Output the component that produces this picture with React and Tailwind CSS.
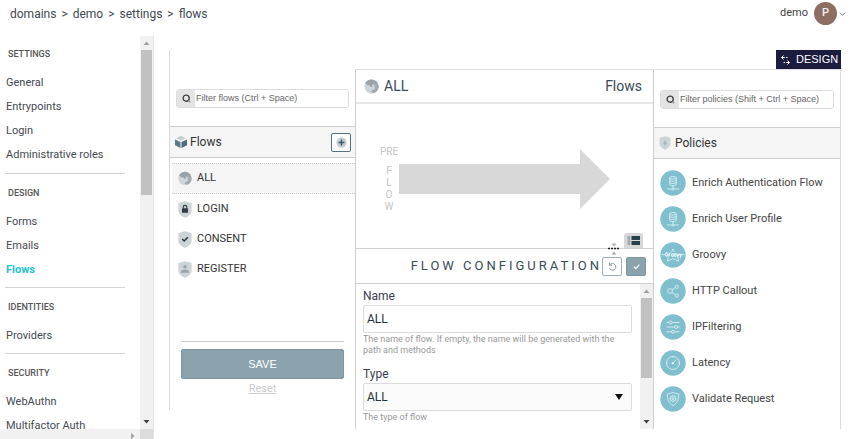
import React from 'react';

const SECTIONS = [
  { title: 'SETTINGS', items: ['General', 'Entrypoints', 'Login', 'Administrative roles'] },
  { title: 'DESIGN', items: ['Forms', 'Emails', 'Flows'] },
  { title: 'IDENTITIES', items: ['Providers'] },
  { title: 'SECURITY', items: ['WebAuthn', 'Multifactor Auth'] },
];

const CRUMBS = ['domains', 'demo', 'settings', 'flows'];

function Globe({ className }) {
  return (
    <svg viewBox="0 0 16 16" className={className} aria-hidden="true">
      <circle cx="8" cy="8" r="7.6" fill="#cdd6da" />
      <path d="M1.200 4.600C2.600 1.800 5.400.4 8 .4c2.800 0 5.200 1.500 6.600 3.800l-1.300 2.600-2.300-1.200-2.600.6.8 1.600-1.900.9-1.600-2.300-2 .6-.9-1.600z" fill="#9aa3a9" />
      <path d="M10.200 6.200l2.200.6 1.400-2.800c1.100 1.100 1.800 2.600 1.800 4 0 3.500-2.300 6.300-5.300 7.200l-2.600-1.300.7-1.800 2.200-.6 1.200-2.400z" fill="#a0aab0" />
    </svg>
  );
}

function Shield({ children, className = 'h-[17px] w-[14px] shrink-0' }) {
  return (
    <svg viewBox="0 0 14 17" className={className} aria-hidden="true">
      <path d="M7 .3l6.600 1.700v7.200c0 3.400-2.500 6-6.600 7.500C2.900 15.200.4 12.600.4 9.200V2z" fill="#ccd4d8" />
      {children}
    </svg>
  );
}

const FLOWS = [
  { name: 'ALL', icon: <Globe className="h-[15px] w-[14px] shrink-0" /> },
  {
    name: 'LOGIN',
    icon: (
      <Shield>
        <rect x="4" y="7.200" width="6" height="4.600" rx=".6" fill="#333a3f" />
        <path d="M5.200 7.500V6.200a1.800 1.800 0 0 1 3.600 0v1.300" fill="none" stroke="#333a3f" strokeWidth="1.100" />
      </Shield>
    ),
  },
  {
    name: 'CONSENT',
    icon: (
      <Shield>
        <path d="M4.200 8l2 2 3.600-3.800" fill="none" stroke="#2a3136" strokeWidth="1.500" />
      </Shield>
    ),
  },
  {
    name: 'REGISTER',
    icon: (
      <Shield>
        <circle cx="7" cy="5.800" r="1.800" fill="#9aa3a8" />
        <path d="M3 11.800c0-2.400 1.600-3.400 4-3.400s4 1 4 3.400z" fill="#9aa3a8" />
      </Shield>
    ),
  },
];

const database = (
  <>
    <ellipse cx="13" cy="7.800" rx="3.300" ry="1.300" />
    <path d="M9.700 7.800v6.600c0 .8 1.500 1.300 3.300 1.300s3.300-.5 3.300-1.300V7.800M9.700 10c0 .8 1.500 1.300 3.300 1.300s3.300-.5 3.300-1.300M9.700 12.200c0 .8 1.500 1.300 3.300 1.300s3.300-.5 3.300-1.300M13 15.700v2.500M7 19h4.900M14.100 19H19" />
    <circle cx="13" cy="19" r="1" />
  </>
);

const POLICIES = [
  { name: 'Enrich Authentication Flow', icon: database },
  { name: 'Enrich User Profile', icon: database },
  {
    name: 'Groovy',
    icon: (
      <>
        <path d="M13 7l1.600 3.200M13 7l-1.600 3.200M8.500 14.800l-1.300 4.400 5.800-2.600 5.800 2.600-1.300-4.400" />
        <path d="M1.500 12.700h4M21 12.700h3.500" />
        <path d="M8.200 11.200c-1-1-2.600-.4-2.700 1.200-.1 1.700 1.700 2.200 2.600 1v-1h-1M9.400 14.400v-2.600c.3-.6.800-.8 1.300-.6M12.500 11.600c-1.300 0-1.300 2.800 0 2.800s1.300-2.800 0-2.800zM15.300 11.600c-1.300 0-1.300 2.800 0 2.800s1.300-2.800 0-2.800zM17 11.600l1 2.800 1-2.800M19.500 11.600l1 2.600 1-2.600-1.300 4.600" strokeWidth="1.100" />
      </>
    ),
  },
  {
    name: 'HTTP Callout',
    icon: (
      <>
        <circle cx="10" cy="13" r="2.400" />
        <circle cx="16.800" cy="8.800" r="1.600" />
        <circle cx="16.800" cy="17.600" r="1.600" />
        <path d="M12 11.700l3.400-2.100M11.800 14.500l3.600 2.200" />
      </>
    ),
  },
  {
    name: 'IPFiltering',
    icon: (
      <>
        <path d="M6.500 8.500h2.400M12.100 8.500h7.400M6.500 13h8M17.700 13h1.800M6.500 17.800h4.900M14.600 17.800h4.900" />
        <circle cx="10.500" cy="8.500" r="1.500" />
        <circle cx="16.100" cy="13" r="1.500" />
        <circle cx="13" cy="17.800" r="1.500" />
      </>
    ),
  },
  {
    name: 'Latency',
    icon: (
      <>
        <circle cx="13" cy="13" r="6.500" />
        <path d="M13.400 12.600l2.800-3M13 6.500v1.300M6.500 13h1.300M18.200 13h1.300" />
        <circle cx="12.800" cy="13.200" r=".8" fill="#fff" />
      </>
    ),
  },
  {
    name: 'Validate Request',
    icon: (
      <>
        <path d="M13 6.200c1.800 1.100 3.700 1.500 5.800 1.600 0 5.400-1.400 9.500-5.800 11.700-4.400-2.200-5.800-6.300-5.800-11.700 2.100-.1 4-.5 5.800-1.600z" />
        <circle cx="13" cy="12.600" r="2.700" />
        <circle cx="13" cy="12.600" r="1" />
        <path d="M13 8.900v1M13 15.300v1M9.300 12.600h1M15.700 12.600h1M10.400 10l.7.7M14.900 14.500l.7.7M15.600 10l-.7.7M11.100 14.500l-.7.7" />
      </>
    ),
  },
];

function Scrollbar({ thumb }) {
  return (
    <div className="flex w-[13px] shrink-0 flex-col items-center bg-[#f1f1f1]" aria-hidden="true">
      <svg viewBox="0 0 13 14" className="h-[14px] w-[13px] shrink-0">
        <path d="M3.500 9h6l-3-3.500z" fill="#a0a0a0" />
      </svg>
      <div className={'w-[11px] bg-[#c1c1c1] ' + thumb} />
      <svg viewBox="0 0 13 14" className="mt-auto h-[14px] w-[13px] shrink-0">
        <path d="M3.500 5h6l-3 3.500z" fill="#404040" />
      </svg>
    </div>
  );
}

function Filter({ id, label }) {
  return (
    <div className="flex h-[19px] shrink-0 overflow-hidden rounded-[3px] border border-[#dcdcdc]">
      <label htmlFor={id} aria-label={label} className="flex w-[18px] shrink-0 items-center justify-center bg-[#e4e4e4]">
        <svg viewBox="0 0 10 10" className="h-[9px] w-[9px]" aria-hidden="true">
          <circle cx="4.600" cy="4.600" r="3.400" fill="none" stroke="#444" strokeWidth="1.500" />
          <path d="M7.200 7.200l2 2" stroke="#888" strokeWidth="1.200" />
        </svg>
      </label>
      <input
        id={id}
        type="text"
        placeholder={label}
        className="w-full min-w-0 bg-white px-px font-['Liberation_Sans',Arial,sans-serif] text-[9px] outline-none placeholder:text-[#666]"
      />
    </div>
  );
}

function Sidebar() {
  return (
    <aside className="flex w-[154px] shrink-0 flex-col border-r border-[#e6e6e6]">
      <div className="flex min-h-0 flex-1">
        <nav className="min-w-0 flex-1 overflow-hidden pt-[11px] pr-[15px] pl-[5px]">
          {SECTIONS.map((s) => (
            <section key={s.title} className="mb-[12px] border-b border-[#d4d4d4] pb-[5px] first:pb-[6px]">
              <h2 className="mb-[10px] pl-[3px] text-[9px] leading-[14px] font-medium text-[#555]">{s.title}</h2>
              <ul>
                {s.items.map((item) => (
                  <li key={item} className="h-6">
                    <a
                      href="#"
                      className={
                        'block pl-px text-[11px] leading-[24px] whitespace-nowrap ' +
                        (item === 'Flows' ? 'font-bold text-[#1dc3d0]' : 'text-[#444a52]')
                      }
                    >
                      {item}
                    </a>
                  </li>
                ))}
              </ul>
            </section>
          ))}
        </nav>
        <Scrollbar thumb="h-[145px]" />
      </div>
      <div className="flex h-[10px] shrink-0 justify-end bg-[#f1f1f1]" aria-hidden="true">
        <svg viewBox="0 0 14 10" className="h-[10px] w-[14px]">
          <path d="M5 4v6l3.500-3z" fill="#a0a0a0" />
        </svg>
        <div className="w-[13px] bg-[#dcdcdc]" />
      </div>
    </aside>
  );
}

function FlowsPanel() {
  return (
    <section className="mb-[19px] flex w-[186px] shrink-0 flex-col border-l border-[#d9d9d9] pt-[39px]">
      <div className="px-[6px]">
        <Filter id="filter-flows" label="Filter flows (Ctrl + Space)" />
      </div>
      <header className="mt-[18px] flex h-8 shrink-0 items-center border-y border-[#cfcfcf] bg-[#f5f5f5] pr-1 pl-1">
        <svg viewBox="0 0 14 14" className="h-[14px] w-[14px]" aria-hidden="true">
          <path d="M7 .8l4.800 2.400L7 5.600 2.200 3.200z" fill="#c3cdd2" />
          <path d="M1 4.400l5.500 2.700v6L1 10.200z" fill="#5d7a8a" />
          <path d="M13 4.400L7.500 7.100v6l5.500-2.900z" fill="#4d6c7d" />
        </svg>
        <h2 className="pl-[2px] text-[12px] text-[#333]">Flows</h2>
        <button type="button" aria-label="Add flow" className="ml-auto flex h-[19px] w-5 items-center justify-center rounded-[2px] border border-[#55717f] bg-white">
          <svg viewBox="0 0 12 12" className="h-[11px] w-[11px]">
            <circle cx="6" cy="6" r="5.600" fill="#c5d0d6" />
            <path d="M6 2.800v6.400M2.800 6h6.400" stroke="#3c5a6b" strokeWidth="1.600" />
          </svg>
        </button>
      </header>
      <ul className="mt-[5px] pl-[2px]">
        {FLOWS.map((f) => (
          <li key={f.name}>
            <button
              type="button"
              className={
                'flex w-full items-center gap-[5px] border-y border-dotted pl-[6px] text-left text-[11px] text-[#333] ' +
                (f.name === 'ALL' ? 'h-[31px] border-[#c8c8c8] bg-[#f5f5f5]' : 'h-[30px] border-transparent')
              }
            >
              {f.icon}
              {f.name}
            </button>
          </li>
        ))}
      </ul>
      <footer className="mt-auto mr-[11px] mb-[13px] ml-[11px] flex flex-col items-center border-t border-[#c9cdc9] pt-[7px]">
        <button type="button" className="h-[30px] w-full rounded-[2px] border border-[#7e98a3] bg-[#8ca2ad] font-['Liberation_Sans',Arial,sans-serif] text-[11px] text-white">
          SAVE
        </button>
        <a href="#" className="mt-[2px] text-[11px] leading-4 text-[#ccc] underline">
          Reset
        </a>
      </footer>
    </section>
  );
}

function Canvas() {
  return (
    <div className="relative flex h-[145px] shrink-0 flex-col border-b border-[#d0d0d0]">
      <div className="flex flex-1 items-start pt-[41px] pr-[43px] pl-[23px]">
        <div className="flex w-5 shrink-0 flex-col items-center text-[10px] leading-[12px] text-[#c4c4c4]">
          <span className="mb-[6px] leading-[14px]">PRE</span>
          {'FLOW'.split('').map((c) => (
            <span key={c}>{c}</span>
          ))}
        </div>
        <svg viewBox="0 0 211 60" preserveAspectRatio="none" className="mt-[4px] h-[60px] min-w-0 flex-1" aria-hidden="true">
          <path d="M0 15h181V0l30 30-30 30V45H0z" fill="#d8d8d8" />
        </svg>
      </div>
      <button type="button" aria-label="Toggle layout" className="absolute right-[10px] bottom-0 flex h-[15px] w-[19px] items-center justify-center rounded-t-[3px] bg-[#d8d8d8]">
        <svg viewBox="0 0 13 9" className="h-[9px] w-[13px]">
          <path d="M.5 0h2.800v9H.5z" fill="#a5abb0" />
          <path d="M4.500 0H13v4H4.500zM4.500 5H13v4H4.500z" fill="#26404f" />
        </svg>
      </button>
      <svg viewBox="0 0 12 14" className="absolute right-[33px] -bottom-[8px] h-[14px] w-[12px]" aria-hidden="true">
        <path d="M3.500 1.500h5L6 4.500zM3.500 12.500h5L6 9.500z" fill="#aaa" />
        <path d="M0 6.500h12" stroke="#222" strokeWidth="1.500" strokeDasharray="2 1" />
      </svg>
    </div>
  );
}

function Editor() {
  return (
    <section className="flex min-w-0 flex-1 flex-col border-x border-[#cfcfcf]">
      <header className="flex h-[34px] shrink-0 items-center border-b-2 border-[#e6e6e6] pr-[11px] pl-2 text-[14px] text-[#3a4b57]">
        <Globe className="mr-[5px] h-[15px] w-[15px]" />
        <h2>ALL</h2>
        <span className="ml-auto">Flows</span>
      </header>
      <Canvas />
      <header className="flex h-[35px] shrink-0 items-center justify-end border-b border-[#d0d0d0] pr-[7px]">
        <h2 className="text-[13px] tracking-[3px] whitespace-nowrap text-[#3a4b57]">FLOW CONFIGURATION</h2>
        <button type="button" aria-label="Undo changes" className="mr-1 flex h-[19px] w-5 shrink-0 items-center justify-center rounded-[2px] border border-[#9db0ba] bg-white">
          <svg viewBox="0 0 10 10" className="h-[9px] w-[9px]" fill="none" stroke="#8299a5" strokeWidth="1.100">
            <path d="M2 3.200A3.700 3.700 0 1 1 1.600 7M1.600.8v2.800h2.800" />
          </svg>
        </button>
        <button type="button" aria-label="Apply changes" className="flex h-[19px] w-5 shrink-0 items-center justify-center rounded-[2px] border border-[#7e98a3] bg-[#8ca2ad]">
          <svg viewBox="0 0 10 10" className="h-[9px] w-[9px]" fill="none" stroke="#fff" strokeWidth="1.300">
            <path d="M2 5.200l2.200 2.100L8.200 3" />
          </svg>
        </button>
      </header>
      <div className="flex min-h-0 flex-1">
        <form className="min-w-0 flex-1 overflow-hidden pt-1 pr-2 pl-[7px]" onSubmit={(e) => e.preventDefault()}>
          <label htmlFor="flow-name" className="block text-[12px] leading-4 text-[#3c3c4c]">Name</label>
          <input
            id="flow-name"
            type="text"
            defaultValue="ALL"
            className="mt-px h-[28px] w-full rounded-[2px] border border-[#dcdcdc] bg-white px-[3px] text-[12px] text-[#26333c] outline-none"
          />
          <p className="mt-px text-[9px] leading-[11px] text-[#999]">
            The name of flow. If empty, the name will be generated with the path and methods
          </p>
          <label htmlFor="flow-type" className="mt-[10px] block text-[12px] leading-4 text-[#3c3c4c]">Type</label>
          <div className="relative mt-px">
            <select
              id="flow-type"
              defaultValue="ALL"
              className="block h-[28px] w-full appearance-none rounded-[2px] border border-[#dcdcdc] bg-[#fbfbfb] px-[3px] text-[12px] text-[#26333c] outline-none"
            >
              <option>ALL</option>
            </select>
            <svg viewBox="0 0 8 6" className="pointer-events-none absolute top-[11px] right-[9px] h-[6px] w-[8px]" aria-hidden="true">
              <path d="M0 0h8L4 6z" fill="#111" />
            </svg>
          </div>
          <p className="text-[9px] leading-[12px] text-[#999]">The type of flow</p>
        </form>
        <Scrollbar thumb="h-[80px]" />
      </div>
    </section>
  );
}

function PoliciesPanel() {
  return (
    <section className="flex w-[187px] shrink-0 flex-col border-r border-[#d9d9d9] pt-[20px]">
      <div className="px-[6px]">
        <Filter id="filter-policies" label="Filter policies (Shift + Ctrl + Space)" />
      </div>
      <header className="mt-[18px] flex h-8 shrink-0 items-center gap-1 border-y border-[#cfcfcf] bg-[#f5f5f5] pl-[5px]">
        <Shield className="h-[14px] w-3">
          <path d="M7.800 4L4.500 9h2l-.5 4 3.500-5.200h-2.200z" fill="#a3aeb5" />
        </Shield>
        <h2 className="text-[12px] text-[#333]">Policies</h2>
      </header>
      <ul className="mt-[11px] flex flex-col gap-[10px] pl-[6px]">
        {POLICIES.map((p) => (
          <li key={p.name} className="flex items-center gap-[6px] text-[11px] text-[#444]">
            <svg viewBox="0 0 26 26" className="h-[26px] w-[26px] shrink-0" fill="none" stroke="#e4f3f6" strokeWidth=".8" aria-hidden="true">
              <circle cx="13" cy="13" r="12.700" fill="#80bfcd" stroke="none" />
              {p.icon}
            </svg>
            {p.name}
          </li>
        ))}
      </ul>
    </section>
  );
}

export default function App() {
  return (
    <div className="flex h-screen flex-col overflow-hidden bg-white font-[Roboto,sans-serif]">
      <header className="flex h-9 shrink-0 items-center pr-[4px] pb-[9px] pl-[10px]">
        <nav aria-label="Breadcrumb" className="flex gap-[5px] text-[12px] text-[#414853]">
          {CRUMBS.map((c, i) => (
            <React.Fragment key={c}>
              {i > 0 && <span>&gt;</span>}
              <a href="#">{c}</a>
            </React.Fragment>
          ))}
        </nav>
        <button type="button" className="ml-auto flex items-center text-[11px] text-[#444]">
          demo
          <span className="mr-[2px] ml-[6px] flex h-[23px] w-[23px] items-center justify-center rounded-full bg-[#8d6e63] text-[11px] font-medium text-[#eee]">P</span>
          <svg viewBox="0 0 8 6" className="h-[6px] w-[7px]" fill="none" stroke="#666" aria-hidden="true">
            <path d="M1 1.500l3 3 3-3" />
          </svg>
        </button>
      </header>
      <div className="flex min-h-0 flex-1">
        <Sidebar />
        <main className="flex min-w-0 flex-1 pt-[14px] pr-[9px] pb-[10px] pl-[15px]">
          <FlowsPanel />
          <div className="flex min-w-0 flex-1 flex-col">
            <div className="flex h-[19px] shrink-0 justify-end">
              <button type="button" className="flex w-[65px] items-center gap-[6px] bg-[#1b1c3e] pl-[5px] font-['Liberation_Sans',Arial,sans-serif] text-[11px] text-white">
                <svg viewBox="0 0 9 10" className="h-[10px] w-[9px] shrink-0" fill="none" stroke="#fff" aria-hidden="true">
                  <path d="M2.500.5l-2 2 2 2M.8 2.500h3M5 2.500h1.500M6.500 5.500l2 2-2 2M8.200 7.500h-3M4 7.500H2.500" />
                </svg>
                DESIGN
              </button>
            </div>
            <div className="flex min-h-0 flex-1 border-t border-[#dedede]">
              <Editor />
              <PoliciesPanel />
            </div>
          </div>
        </main>
      </div>
    </div>
  );
}
